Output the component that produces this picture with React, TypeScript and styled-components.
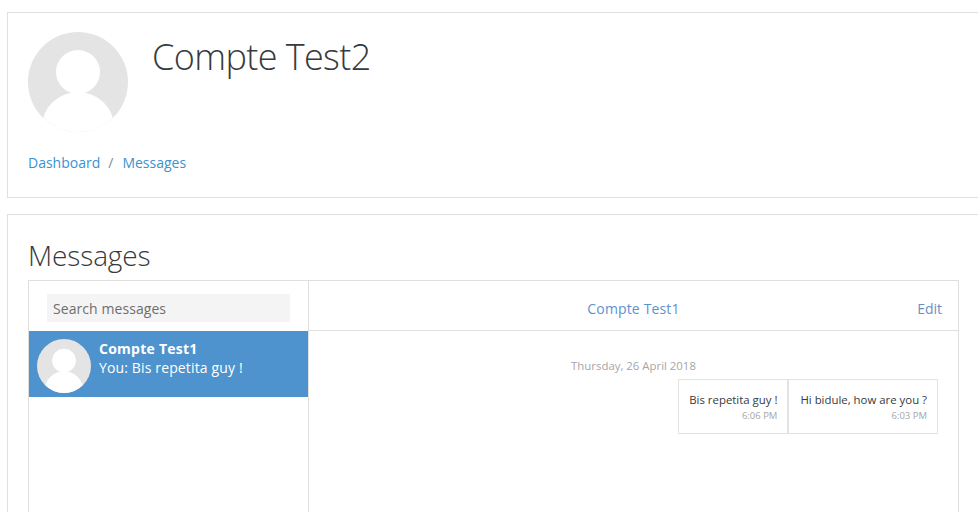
import styled, { createGlobalStyle } from 'styled-components'

const GlobalStyle = createGlobalStyle`
  html, body {
    margin: 0;
    height: 512px;
    overflow: hidden;
    background: #fff;
    font-family: "Open Sans", "Liberation Sans", sans-serif;
    color: #373a3c;
  }
`

function DefaultAvatar({ size }: { size: number }) {
  const clipId = `avatar-clip-${size}`
  return (
    <AvatarSvg width={size} height={size} viewBox="0 0 100 100">
      <defs>
        <clipPath id={clipId}>
          <circle cx="50" cy="50" r="50" />
        </clipPath>
      </defs>
      <circle cx="50" cy="50" r="50" fill="#e4e4e4" />
      <g clipPath={`url(#${clipId})`} fill="#fff">
        <circle cx="50" cy="40" r="22" />
        <ellipse cx="50" cy="95" rx="36" ry="35" />
      </g>
    </AvatarSvg>
  )
}

export default function App() {
  return (
    <Page>
      <GlobalStyle />
      <HeaderCard>
        <HeaderTop>
          <DefaultAvatar size={100} />
          <PageTitle>Compte Test2</PageTitle>
        </HeaderTop>
        <Breadcrumb>
          <CrumbLink>Dashboard</CrumbLink>
          <CrumbSep>/</CrumbSep>
          <CrumbLink>Messages</CrumbLink>
        </Breadcrumb>
      </HeaderCard>

      <MainCard>
        <SectionTitle>Messages</SectionTitle>
        <MessageArea>
          <Sidebar>
            <SearchRow>
              <SearchInput placeholder="Search messages" />
            </SearchRow>
            <Contact>
              <DefaultAvatar size={54} />
              <ContactText>
                <ContactName>Compte Test1</ContactName>
                <ContactPreview>You: Bis repetita guy !</ContactPreview>
              </ContactText>
            </Contact>
          </Sidebar>
          <Conversation>
            <ConversationHeader>
              <ConversationName>Compte Test1</ConversationName>
              <EditLink>Edit</EditLink>
            </ConversationHeader>
            <ConversationBody>
              <DayLabel>Thursday, 26 April 2018</DayLabel>
              <Bubbles>
                <Bubble>
                  <BubbleText>Bis repetita guy !</BubbleText>
                  <BubbleTime>6:06 PM</BubbleTime>
                </Bubble>
                <Bubble>
                  <BubbleText>Hi bidule, how are you ?</BubbleText>
                  <BubbleTime>6:03 PM</BubbleTime>
                </Bubble>
              </Bubbles>
            </ConversationBody>
          </Conversation>
        </MessageArea>
      </MainCard>
    </Page>
  )
}

const Page = styled.div`
  width: 1000px;
  height: 512px;
  overflow: hidden;
  padding: 12px 0 0 7px;
  box-sizing: border-box;
`

const AvatarSvg = styled.svg`
  display: block;
  flex-shrink: 0;
`

const HeaderCard = styled.header`
  box-sizing: border-box;
  height: 186px;
  border: 1px solid #dfdfdf;
  padding: 19px 20px 0;
`

const HeaderTop = styled.div`
  display: flex;
  align-items: flex-start;
  gap: 24px;
  height: 110px;
`

const PageTitle = styled.h1`
  margin: 0;
  font-size: 36px;
  line-height: 50px;
  font-weight: 300;
  letter-spacing: -0.6px;
  color: #373a3c;
`

const Breadcrumb = styled.nav`
  display: flex;
  align-items: center;
  margin-top: 10px;
  font-size: 14px;
  line-height: 21px;
`

const CrumbLink = styled.a`
  color: #3a92d0;
`

const CrumbSep = styled.span`
  margin: 0 9px 0 8px;
  color: #818a91;
`

const MainCard = styled.main`
  box-sizing: border-box;
  margin-top: 16px;
  height: 320px;
  border: 1px solid #dfdfdf;
  border-bottom: none;
  padding: 20px 20px 0;
`

const SectionTitle = styled.h2`
  margin: 0 0 4px;
  font-size: 28px;
  line-height: 41px;
  font-weight: 300;
  letter-spacing: -0.12px;
  color: #373a3c;
`

const MessageArea = styled.section`
  display: flex;
  box-sizing: border-box;
  width: 931px;
  height: 240px;
  border: 1px solid #dfdfdf;
  border-bottom: none;
`

const Sidebar = styled.aside`
  box-sizing: border-box;
  width: 280px;
  flex-shrink: 0;
  border-right: 1px solid #dfdfdf;
`

const SearchRow = styled.div`
  display: flex;
  justify-content: center;
  padding: 13px 18px 9px 18px;
`

const SearchInput = styled.input`
  box-sizing: border-box;
  width: 243px;
  height: 28px;
  padding: 0 6px;
  border: none;
  outline: none;
  background: #f4f4f4;
  font-family: inherit;
  font-size: 14px;
  letter-spacing: 0.07px;

  &::placeholder {
    color: #6e6e6e;
    opacity: 1;
  }
`

const Contact = styled.div`
  box-sizing: border-box;
  display: flex;
  align-items: center;
  gap: 8px;
  height: 66px;
  padding: 4px 0 0 8px;
  background: #4e93ce;
  color: #fff;
`

const ContactText = styled.div`
  display: flex;
  flex-direction: column;
  align-self: flex-start;
  padding-top: 4px;
`

const ContactName = styled.strong`
  font-size: 14px;
  line-height: 19px;
  font-weight: 700;
  letter-spacing: 0.25px;
`

const ContactPreview = styled.span`
  font-size: 14px;
  line-height: 19px;
  letter-spacing: 0.14px;
`

const Conversation = styled.div`
  flex: 1;
  min-width: 0;
`

const ConversationHeader = styled.div`
  box-sizing: border-box;
  position: relative;
  display: flex;
  align-items: center;
  justify-content: center;
  height: 50px;
  padding-top: 6px;
  border-bottom: 1px solid #dfdfdf;
  font-size: 14px;
`

const ConversationName = styled.a`
  color: #5b93cf;
  letter-spacing: 0.15px;
`

const EditLink = styled.a`
  position: absolute;
  right: 16px;
  top: 18px;
  line-height: 19px;
  color: #6a8fc4;
`

const ConversationBody = styled.div`
  display: flex;
  flex-direction: column;
  padding-top: 27px;
`

const DayLabel = styled.div`
  align-self: center;
  font-size: 11.4px;
  line-height: 16px;
  color: #a6a6a6;
`

const Bubbles = styled.div`
  display: flex;
  justify-content: flex-end;
  margin-top: 5px;
  padding-right: 20px;
`

const Bubble = styled.div`
  box-sizing: border-box;
  height: 55px;
  padding: 10px 10px 0;
  border: 1px solid #e3e3e3;
  text-align: right;

  & + & {
    padding-left: 11px;
  }
`

const BubbleText = styled.div`
  font-size: 11.4px;
  line-height: 20px;
  color: #373a3c;
`

const BubbleTime = styled.div`
  font-size: 9.5px;
  line-height: 12px;
  color: #a6a6a6;
`
